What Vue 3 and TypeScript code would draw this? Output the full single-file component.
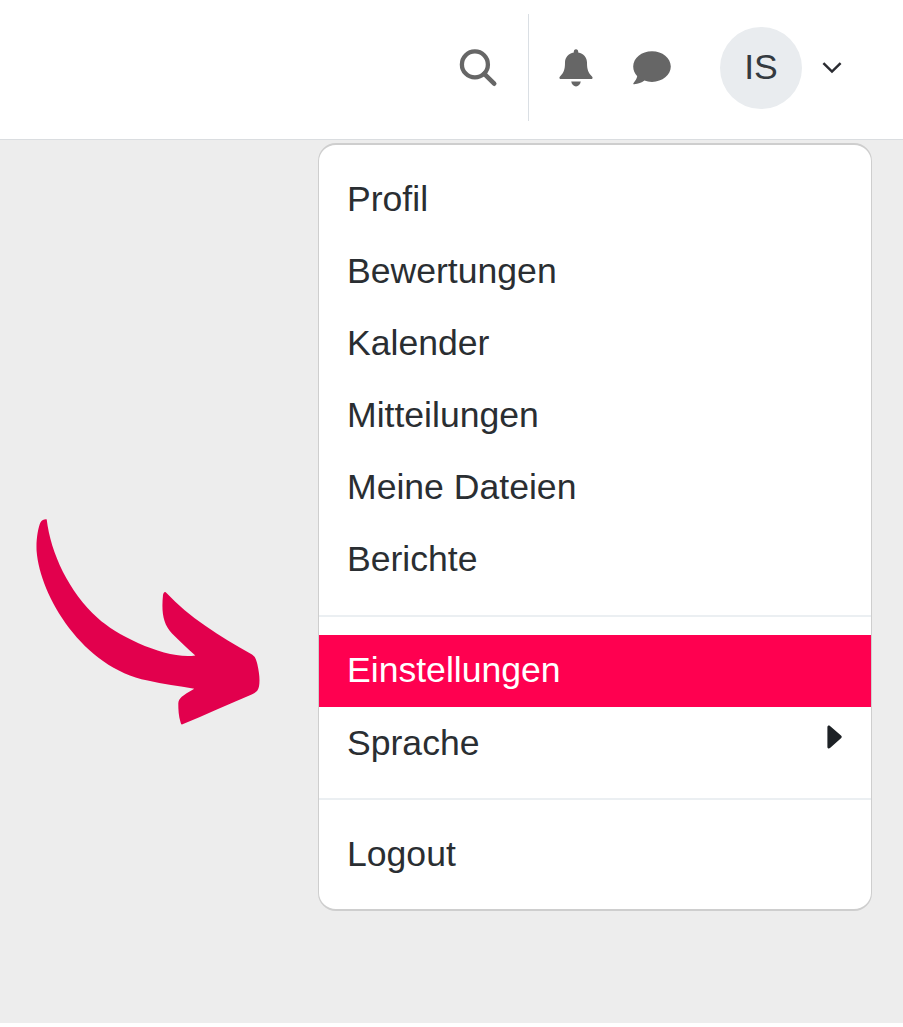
<script setup lang="ts">
interface Item {
  label: string
  active?: boolean
  submenu?: boolean
  low?: boolean
}

const groups: Item[][] = [
  [
    { label: 'Profil' },
    { label: 'Bewertungen' },
    { label: 'Kalender' },
    { label: 'Mitteilungen' },
    { label: 'Meine Dateien' },
    { label: 'Berichte' },
  ],
  [{ label: 'Einstellungen', active: true }, { label: 'Sprache', submenu: true, low: true }],
  [{ label: 'Logout', low: true }],
]
</script>

<template>
  <div class="page">
    <header class="navbar">
      <button class="tool search" aria-label="Suche">
        <svg width="40" height="40" viewBox="0 0 40 40">
          <circle cx="16.9" cy="15.4" r="13" fill="none" stroke="#666" stroke-width="4.3" />
          <path d="M26.300 24.800 L36.200 34.700" stroke="#666" stroke-width="4.6" stroke-linecap="round" />
        </svg>
      </button>
      <button class="tool bell" aria-label="Mitteilungen">
        <svg width="34" height="38" viewBox="0 0 34 38" fill="#666">
          <path d="M17 0.300C15.500.3 14.800 1.300 14.800 2.600V3.500C9.400 4.500 6 8.500 6 13.500C6 20.500 4.800 24 1 27.400C-.2 28.600.5 30 1.900 30H32.100C33.500 30 34.200 28.600 33 27.400C29.200 24 28 20.500 28 13.500C28 8.500 24.600 4.500 19.200 3.500V2.600C19.200 1.300 18.500.3 17 .3Z" />
          <path d="M12.200 32.600H21.800C21.300 35.500 19.300 37.400 17 37.400S12.700 35.500 12.200 32.600Z" />
        </svg>
      </button>
      <button class="tool chat" aria-label="Chat">
        <svg width="38" height="34" viewBox="0 0 38 34" fill="#666">
          <path d="M19 .3C29.4.3 37.8 7.1 37.8 15.6S29.4 30.9 19 30.9C16.3 30.9 13.7 30.4 11.4 29.6C8.8 31.6 5.2 33.2 1.2 33.200C.2 33.200 0 32.5.6 31.9C2.3 30 3.8 27.8 4.2 25.3C1.7 22.7.2 19.3.2 15.6C.2 7.1 8.6.3 19 .3Z" />
        </svg>
      </button>
      <div class="avatar">IS</div>
      <svg class="caret" width="20" height="12" viewBox="0 0 20 12">
        <path d="M1.4 1.2 L10 9.6 L18.6 1.2" fill="none" stroke="#2a2b31" stroke-width="2.5" />
      </svg>
    </header>

    <main class="content">
      <nav class="menu">
        <ul v-for="(group, g) in groups" :key="g" class="group">
          <li
            v-for="item in group"
            :key="item.label"
            class="item"
            :class="{ active: item.active, low: item.low }"
          >
            <span>{{ item.label }}</span>
            <svg v-if="item.submenu" class="arrow" width="16" height="24" viewBox="0 0 16 24">
              <path d="M.4 2C.4.4 2 0 3 .9L14 10.6C15 11.4 15 12.4 14 13.3L3 23C2 23.9.4 23.5.4 22Z" fill="#1d2125" />
            </svg>
          </li>
        </ul>
      </nav>
      <svg class="pointer" width="224" height="206" viewBox="0 0 224 206">
        <path
          d="M4.300 3.700C6 .8 8.300.2 10.700.4C14.700 34 33 73 61.700 99C81 117 131 141 159.300 136.500C151 129 143.500 122 136 114.500C127 105 125.300 93 127 76C127.300 74 128.800 71.500 130.500 74C153 98 183 117 216 135.500C219.500 138 220 140 221.300 145C223.500 155 224 161 223 167.500C222 172 220 173.500 215.700 175.500C191 186 169 196 146.500 205.200Q145.200 206.500 144.600 203.500C142.500 197 142.300 190 142.300 184.500C142.500 179 146 177 158.300 169.700C143 167 127 165 111.700 161.500C47 149 4 77 .6 32C0 21 2 9 4.300 3.700Z"
          fill="#e2004d"
        />
      </svg>
    </main>
  </div>
</template>

<style>
body {
  margin: 0;
  background: #fff;
}
</style>

<style scoped>
.page {
  position: relative;
  width: 903px;
  height: 1027px;
  overflow: hidden;
  background: #fff;
  color: #2a2e32;
  font-family: 'Liberation Sans', Arial, sans-serif;
  font-size: 35.6px;
}
.navbar {
  box-sizing: border-box;
  height: 140px;
  display: flex;
  align-items: flex-start;
  justify-content: flex-end;
  padding: 14px 61px 0 0;
  border-bottom: 1px solid #dadde0;
}
.tool {
  display: flex;
  padding: 0;
  border: 0;
  background: none;
}
.search {
  box-sizing: border-box;
  height: 107px;
  padding: 35px 30px 0 0;
  border-right: 1px solid #dadfe4;
}
.bell {
  margin: 35px 0 0 30px;
}
.chat {
  margin: 37px 0 0 40px;
}
.avatar {
  width: 82px;
  height: 82px;
  margin: 13px 0 0 49px;
  border-radius: 50%;
  background: #e9ecef;
  color: #343a40;
  line-height: 80px;
  text-align: center;
}
.caret {
  margin: 48px 0 0 20px;
}
.content {
  box-sizing: border-box;
  height: 883px;
  padding: 3px 31px 0 0;
  display: flex;
  justify-content: flex-end;
  align-items: flex-start;
  background: #ededed;
}
.menu {
  box-sizing: border-box;
  width: 554px;
  height: 768px;
  padding: 19px 0;
  border: solid #cecece;
  border-width: 2px 1px;
  border-radius: 18px;
  background: #fff;
}
.group {
  margin: 0;
  padding: 0;
  list-style: none;
}
.group + .group {
  margin-top: 19px;
  padding-top: 18px;
  border-top: 2px solid #ebeff2;
}
.item {
  box-sizing: border-box;
  height: 72px;
  display: flex;
  align-items: flex-start;
  justify-content: space-between;
  padding: 8px 28px 0 28px;
  line-height: 54px;
}
.low span {
  padding-top: 1px;
}
.active {
  background: #ff0050;
  color: #fff;
}
.arrow {
  margin-top: 10px;
}
.pointer {
  position: absolute;
  left: 36px;
  top: 519px;
}
</style>
